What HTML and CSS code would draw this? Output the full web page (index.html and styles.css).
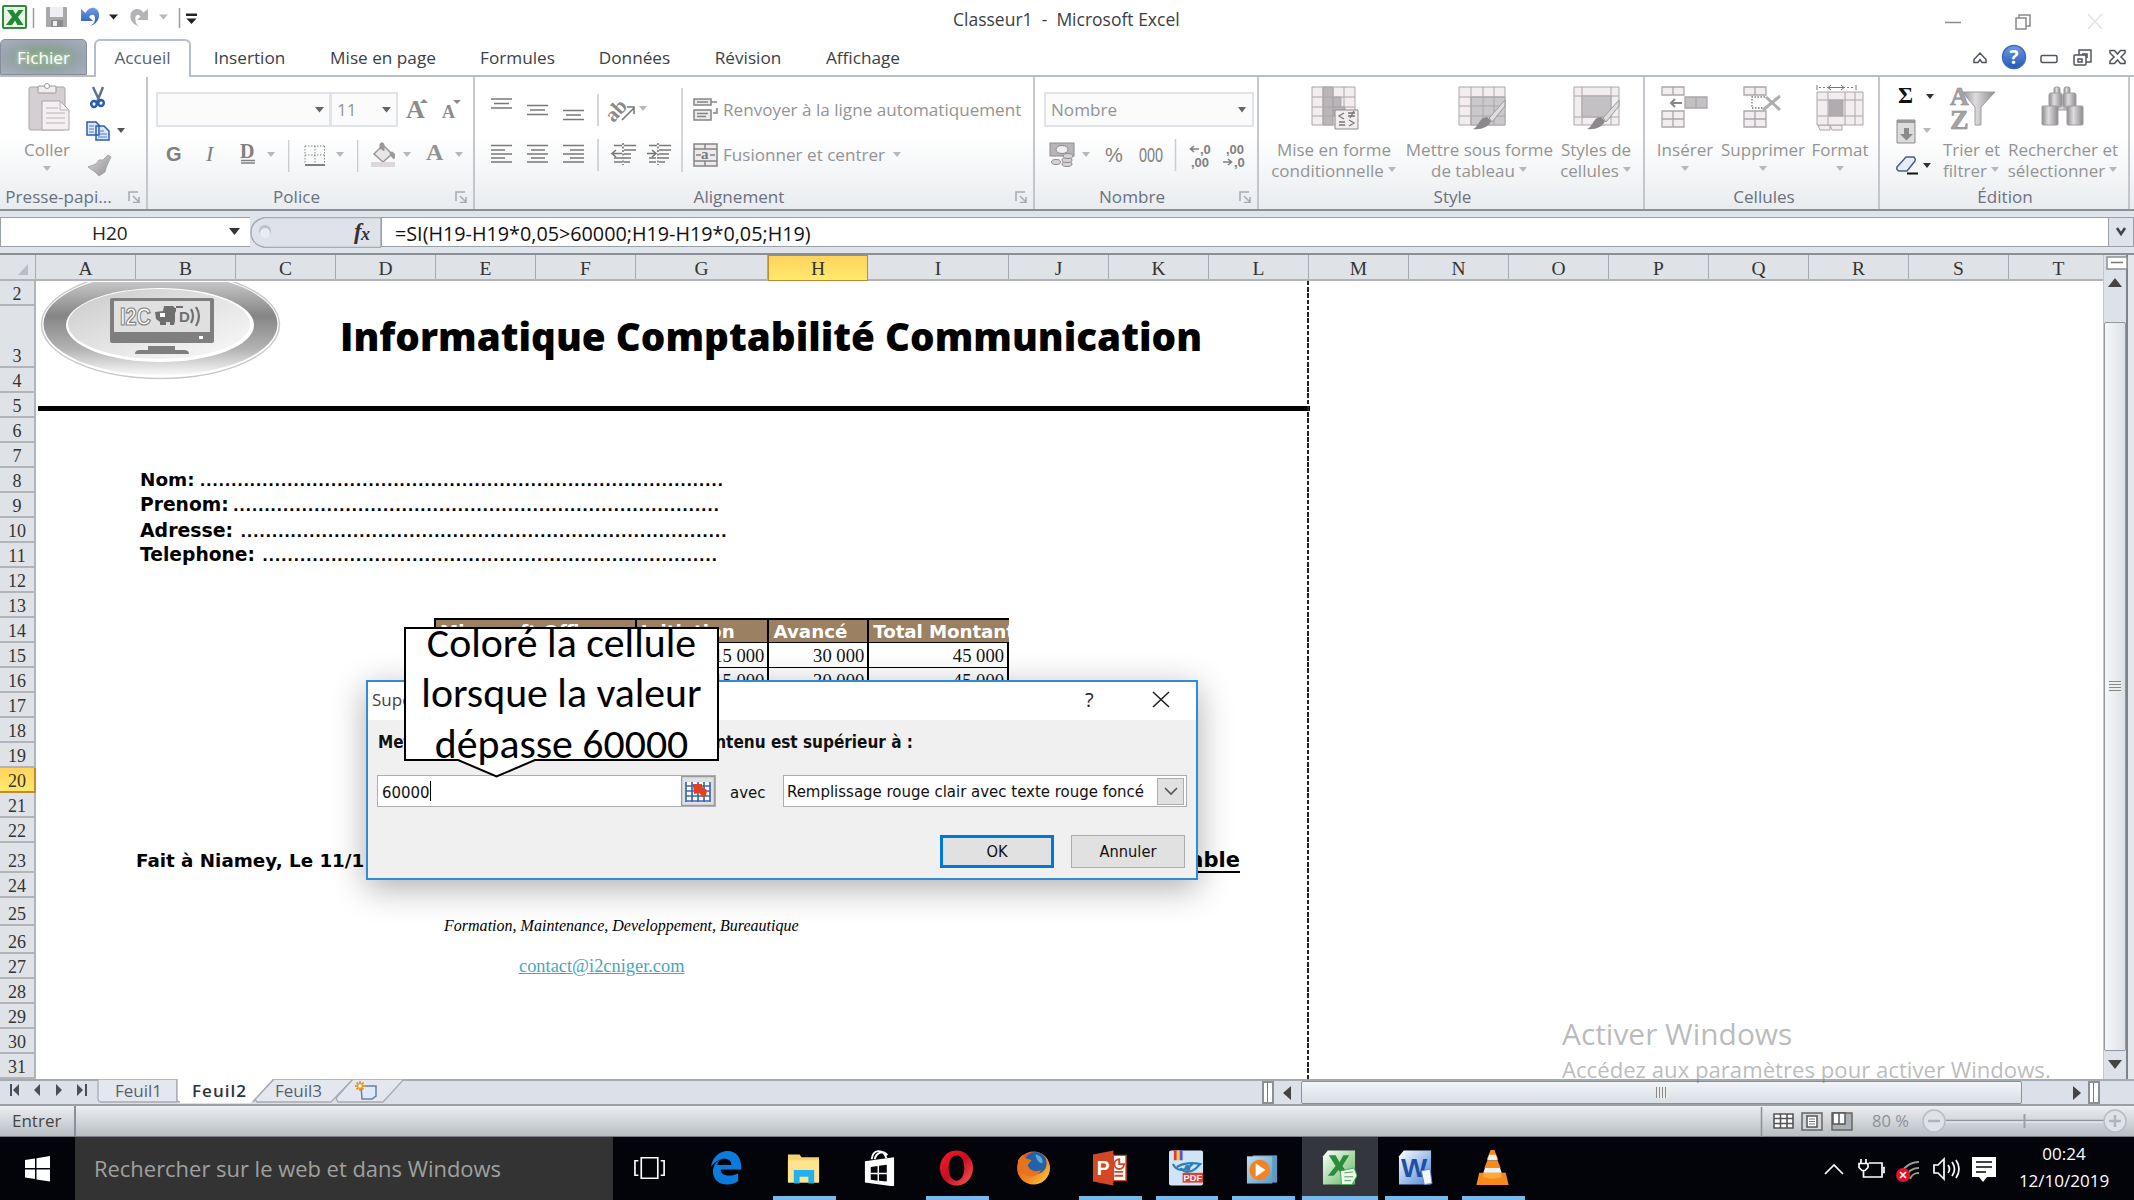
FILE: index.html
```html
<!DOCTYPE html>
<html lang="fr">
<head>
<meta charset="utf-8">
<title>Classeur1 - Microsoft Excel</title>
<link rel="stylesheet" href="styles.css">
</head>
<body>
<svg class="defs" width="0" height="0">
  <defs>
    <linearGradient id="blue" x1="0" y1="0" x2="0" y2="1"><stop offset="0" stop-color="#6f9be6"/><stop offset="1" stop-color="#2457b0"/></linearGradient>
    <linearGradient id="grey" x1="0" y1="0" x2="1" y2="1"><stop offset="0" stop-color="#dcdadc"/><stop offset="1" stop-color="#8f8d90"/></linearGradient>
    <linearGradient id="tube" x1="0" y1="0" x2="1" y2="0"><stop offset="0" stop-color="#8d8b8e"/><stop offset=".4" stop-color="#dedcde"/><stop offset="1" stop-color="#8d8b8e"/></linearGradient>
    <linearGradient id="ring" x1="0" y1="0" x2="0" y2="1"><stop offset="0" stop-color="#d8d8d8"/><stop offset=".42" stop-color="#858585"/><stop offset=".75" stop-color="#b4b4b4"/><stop offset="1" stop-color="#fafafa"/></linearGradient>
    <linearGradient id="face" x1="0" y1="0" x2="1" y2="1"><stop offset="0" stop-color="#c9c9c9"/><stop offset=".5" stop-color="#e4e4e4"/><stop offset="1" stop-color="#fafafa"/></linearGradient>
    <linearGradient id="green" x1="0" y1="0" x2="1" y2="1"><stop offset="0" stop-color="#fff"/><stop offset="1" stop-color="#5cb85f"/></linearGradient>
    <linearGradient id="word" x1="0" y1="0" x2="1" y2="1"><stop offset="0" stop-color="#fff"/><stop offset="1" stop-color="#4d86d6"/></linearGradient>
    <linearGradient id="fox" x1="0" y1="0" x2="1" y2="1"><stop offset="0" stop-color="#e0462a"/><stop offset=".6" stop-color="#f08a24"/><stop offset="1" stop-color="#ffd83a"/></linearGradient>
    <linearGradient id="opera" x1="0" y1="0" x2="1" y2="1"><stop offset="0" stop-color="#ff1b2d"/><stop offset=".5" stop-color="#c50f1f"/><stop offset="1" stop-color="#ff5a5a"/></linearGradient>
    <linearGradient id="glass" x1="0" y1="0" x2="1" y2="1"><stop offset="0" stop-color="#bfe0f2"/><stop offset="1" stop-color="#5c9cc4"/></linearGradient>
  </defs>
</svg>

<header class="titlebar">
  <svg width="205" height="38" viewBox="0 0 205 38">
    <rect x="3" y="6" width="23" height="22" rx="1" fill="#eaf5e6" stroke="#2e8b3d" stroke-width="2"/>
    <path d="M7 10h6l2.500 4 3-4h5l-5.500 7 5.500 8h-6l-2.500-4.500-3 4.500H6l6-8z" fill="#1f8a34"/>
    <path d="M33.500 8v20M179.500 8v20" stroke="#9b9b9b" stroke-width="1.500"/>
    <rect x="46" y="7" width="21" height="20" rx="1" fill="#a9a9ad"/><rect x="50" y="7" width="13" height="10" fill="#efeff1"/><rect x="51" y="20" width="12" height="7" fill="#8b8b90"/><rect x="53" y="21" width="4" height="5" fill="#eee"/>
    <path d="M81 9v12h12l-4-4c3-4 7-2 6 3-.500 3-2 4-5 6 6-2 9.500-6 9-12-1-7-9-9-13.500-1z" fill="url(#blue)"/>
    <path d="M109 14.500h9l-4.500 5z" fill="#222"/>
    <path d="M148 9v11h-11l3.500-3.500c-3-3-6-1-5 4 .500 3 1 4 4 6-6-2-10-6-9-12 1-6 9-8 13-2z" fill="#b4b4b8"/>
    <path d="M159 14.500h9l-4.500 5z" fill="#b9b9b9"/>
    <path d="M186 13.500h11v2.500h-11zM186.500 18.500h10l-5 5.500z" fill="#222"/>
  </svg>
  <h1 class="window-title">Classeur1 &nbsp;-&nbsp; Microsoft Excel</h1>
  <svg width="190" height="38" viewBox="1944 0 190 38" fill="none" stroke="#8a8a8a" stroke-width="1.500">
    <path d="M1945 22.500h16"/><path d="M2016 18h10v11h-10zM2019 18v-3h11v11h-4"/><path d="M2088 14l14 15M2102 14l-14 15" stroke="#e2e2e2"/>
  </svg>
</header>

<nav class="tabs">
  <span class="tab file">Fichier</span>
  <span class="tab active">Accueil</span>
  <span class="tab w-ins">Insertion</span>
  <span class="tab w-mise">Mise en page</span>
  <span class="tab w-form">Formules</span>
  <span class="tab w-don">Données</span>
  <span class="tab w-rev">Révision</span>
  <span class="tab w-aff">Affichage</span>
  <svg class="right" width="164" height="36" viewBox="1970 38 164 36" fill="none" stroke="#50555d" stroke-width="1.500">
    <path d="M1974 61.500v-3l6-6.500 6 6.500v3h-4l-2-3-2 3z"/>
    <circle cx="2014" cy="56" r="11.500" fill="url(#blue)" stroke="#3b6cc0"/>
    <text x="2014" y="63" class="help">?</text>
    <rect x="2041" y="54.500" width="16" height="7" rx="1.500"/>
    <path d="M2079 54v-5h12v12h-5"/><rect x="2074" y="54" width="12" height="10" rx="1"/><rect x="2078" y="58" width="4" height="3"/><path d="M2082 53h5v4"/>
    <path d="M2110 49.500h4.500l3 3.500 3-3.500h4.500v2.500l-4 4 4 4v2.500h-4.500l-3-3.500-3 3.500h-4.500V60l4-4-4-4z"/>
  </svg>
</nav>

<section class="ribbon">
  <div class="group g1">
    <div class="body">
      <div class="big">
        <svg width="64" height="56" viewBox="15 78 64 56">
          <rect x="29" y="88" width="36" height="43" rx="2" fill="#d3cfd2" stroke="#a9a5a8"/><rect x="38" y="87" width="18" height="7" rx="1" fill="#eee" stroke="#999"/><circle cx="47" cy="87" r="2.500" fill="#fff" stroke="#999"/>
          <path d="M42 102h18l9 9v20H42z" fill="#f5eff2" stroke="#a9a5a8"/><path d="M60 102v9h9M46 109h12M46 114h19M46 119h19M46 124h19" fill="none" stroke="#b8b4b7"/>
        </svg>
        <span>Coller</span>
        <svg width="10" height="20" viewBox="0 0 10 20"><path d="M1 6h8l-4 5z" fill="#b5b8bd"/></svg>
      </div>
      <svg width="58" height="104" viewBox="82 78 58 104">
        <path d="M93 87l7 15M103 87l-6 15" stroke="#5c7590" stroke-width="2.500"/><g fill="none" stroke="#2b5cb3" stroke-width="2.500"><ellipse cx="94" cy="104" rx="2.800" ry="3"/><ellipse cx="101" cy="103" rx="2.800" ry="3"/></g>
        <path d="M87 122h9l3 3v10H87zM96 126h8l5 5v9H96z" fill="#dbe8fb" stroke="#2b5cb3" stroke-width="1.500"/><path d="M89 126h5M89 129h5M89 132h5M98 131h6M98 134h9M98 137h9" stroke="#4b7ed2"/>
        <path d="M117 128h8l-4 5z" fill="#555"/>
        <path d="M103 160l5-5 3 2-3 6-2 5-1 4-6 4-4-4-7-5 8-3 3-4z" fill="url(#grey)" stroke="#aaa6a9"/>
      </svg>
    </div>
    <footer><span class="lab1">Presse-papi...</span><svg width="12" height="12" class="launch"><use href="#la"/></svg></footer>
  </div>

  <div class="group g2">
    <div class="body col">
      <div class="line">
        <div class="combo c1"><svg width="12" height="8"><path d="M1 1h9l-4.500 5.500z" fill="#666"/></svg></div>
        <div class="combo c2"><span>11</span><svg width="12" height="8"><path d="M1 1h9l-4.500 5.500z" fill="#666"/></svg></div>
        <svg width="70" height="44" viewBox="401 88 70 44" fill="#8b8b8b"><text x="406" y="118" class="ser b" font-size="26">A</text><path d="M420 103h8l-4-4z"/><text x="442" y="118" class="ser b" font-size="18">A</text><path d="M453 100h8l-4 4z"/></svg>
      </div>
      <svg width="320" height="44" viewBox="152 132 320 44" fill="#808080">
        <text x="166" y="161" class="ss b" font-size="20">G</text><text x="206" y="161" class="ser i" font-size="22">I</text><text x="240" y="158" class="ser b" font-size="20">D</text><path d="M241 160.500h14M241 163h14" stroke="#808080" stroke-width="1.300"/>
        <g fill="#b5b8bd"><path d="M267 152h8l-4 5zM336 152h8l-4 5zM403 152h8l-4 5zM455 152h8l-4 5z"/><path d="M288 140h1.300v32H288zM357 140h1.300v32H357z" opacity=".7"/></g>
        <path d="M305 146h20M305 155h20M305 146v18M315 146v18M324.500 146v18" stroke="#888" stroke-dasharray="1.500 1.500" fill="none"/><path d="M305 164h20v2h-20z"/>
        <path d="M374 154l9-9 9 9-9 8z" fill="#e8e6e8" stroke="#999" stroke-width="1.500"/><path d="M380 149v-5q3-3 4 1v6M391 152q5 0 3 7-3-2-4-5z" fill="#999" stroke="#999"/><rect x="371" y="162" width="24" height="5" fill="#ddd6da"/>
        <text x="426" y="160" class="ser b" font-size="24" fill="#929292">A</text>
      </svg>
    </div>
    <footer><span class="lab2">Police</span><svg width="12" height="12" class="launch"><use href="#la"/></svg></footer>
  </div>

  <div class="group g3">
    <div class="body">
      <svg width="212" height="96" viewBox="476 82 212 96" fill="none" stroke="#787878" stroke-width="1.600">
        <path d="M491 99h21M494 103.500h15M491 108h21" /><path d="M527 105.500h21M530 110h15M527 114.500h21"/><path d="M563 110.500h21M566 115h15M563 119.500h21"/>
        <path d="M491 145.500h21M491 150h14M491 154h21M491 158h14M491 162h21M527 145.500h21M531 150h14M527 154h21M531 158h14M527 162h21M563 145.500h21M570 150h14M563 154h21M570 158h14M563 162h21"/>
        <path d="M598 94v32M598 139v32M682 88v84" stroke="#c9ccd1"/>
        <g transform="rotate(-48 620 113)"><text x="608" y="115" class="ser b ab">ab</text></g><path d="M622 120l12-12M634 114v-7h-7"/>
        <path d="M639 106h8l-4 5z" fill="#b5b8bd" stroke="none"/>
        <path d="M614 145.500h8M624 145.500h12M624 150h12M624 154h7M614 158h8M624 158h7M614 162h8M624 162h6"/><path d="M623 143v22" stroke-dasharray="2 1.500"/><path d="M622 153.500h-9M616 150l-4 3.500 4 3.500"/>
        <path d="M649 145.500h8M659 145.500h12M659 150h12M659 154h10M649 158h7M659 158h10M649 162h7M659 162h6"/><path d="M658 143v22" stroke-dasharray="2 1.500"/><path d="M647 153.500h9M652 150l4 3.500-4 3.500"/>
      </svg>
      <div class="stack">
        <div class="btn"><svg width="26" height="28" viewBox="0 0 26 28" fill="#eee9ec" stroke="#858585" stroke-width="1.500"><path d="M1 3h17v6H1zM1 14h17v10H1zM4 17.500h11M4 20.500h9M18 6h6M24 12v5h-4M4 6h11"/></svg><span>Renvoyer à la ligne automatiquement</span></div>
        <div class="btn"><svg width="26" height="28" viewBox="0 0 26 28" fill="#eee9ec" stroke="#858585" stroke-width="1.500"><path d="M1 3h23v22H1zM1 8h23M1 20h23M12 3v5M12 20v5M3 14h5M17 14h5"/><text x="8" y="18" class="ser b m">a</text></svg><span>Fusionner et centrer</span><svg class="dd" width="9" height="6"><path d="M0 0h8l-4 5z" fill="#b5b8bd"/></svg></div>
      </div>
    </div>
    <footer><span class="lab3">Alignement</span><svg width="12" height="12" class="launch"><use href="#la"/></svg></footer>
  </div>

  <div class="group g4">
    <div class="body col">
      <div class="line"><div class="combo c3"><span>Nombre</span><svg width="12" height="8"><path d="M1 1h8l-4 5.500z" fill="#666"/></svg></div></div>
      <svg width="218" height="44" viewBox="1038 132 218 44" fill="#808080">
        <rect x="1050" y="143" width="24" height="13" fill="#b8b5b8" stroke="#8d8d8d"/><ellipse cx="1062" cy="149.500" rx="6" ry="4" fill="#eee" stroke="#8d8d8d"/><g fill="#d5d2d5" stroke="#8d8d8d"><ellipse cx="1067" cy="164" rx="5" ry="2.500"/><ellipse cx="1067" cy="160" rx="5" ry="2.500"/><ellipse cx="1068" cy="156" rx="5" ry="2.500"/><ellipse cx="1056" cy="162" rx="4.500" ry="2.500"/></g>
        <path d="M1082 152h8l-4 5z" fill="#b5b8bd"/><text x="1105" y="162" class="ss" font-size="20">%</text><text x="1139" y="162" class="ss" font-size="20" textLength="24" lengthAdjust="spacingAndGlyphs">000</text>
        <path d="M1175.500 139v32" stroke="#c9ccd1" stroke-width="1.500"/>
        <g class="ss b" font-size="13"><text x="1200" y="154">,0</text><text x="1191" y="167">,00</text><text x="1226" y="154">,00</text><text x="1234" y="167">,0</text></g>
        <path d="M1199 149h-8M1194 146l-3.500 3 3.500 3M1223 162h8M1228 159l3.500 3-3.500 3" fill="none" stroke="#808080" stroke-width="1.600"/>
      </svg>
    </div>
    <footer><span class="lab4">Nombre</span><svg width="12" height="12" class="launch"><use href="#la"/></svg></footer>
  </div>

  <div class="group g5">
    <div class="body">
      <div class="big b51">
        <svg width="60" height="56" viewBox="1303 78 60 56" stroke="#aaa6a9" fill="#f3edf0"><path d="M1311 88h43v38h-43z"/><path d="M1322 88h10v38h-10zM1332 98h8v10h-8zM1332 108h12v9h-12z" fill="#b9b6b9"/><path d="M1311 98h43M1311 108h43M1311 117h43M1322 88v38M1332 88v38M1343 88v38" fill="none"/><path d="M1334 111h23v19h-23z" stroke="#8a8a8a"/><path d="M1343 114l-5 3 5 3M1338 123h6M1338 126h6M1347 114h7M1347 117h7M1349 119l4-7M1348 121l5 3-5 3" fill="none" stroke="#777" stroke-width="1.300"/></svg>
        <span>Mise en forme<br>conditionnelle<svg class="dd" width="9" height="6"><path d="M0 0h8l-4 5z" fill="#b5b8bd"/></svg></span>
      </div>
      <div class="big b52">
        <svg width="60" height="56" viewBox="1447 78 60 56" stroke="#aaa6a9" fill="#f3edf0"><path d="M1456 88h46v38h-46z"/><path d="M1468 98h34v28h-34z" fill="#cbc8cb"/><path d="M1456 98h46M1456 107h46M1456 117h46M1468 88v38M1480 88v38M1491 88v38" fill="none"/><path d="M1502 101l-16 18 3 4 13-16z" fill="#ddd" stroke="#999"/><path d="M1470 130c6-2 6-12 14-12l4 4c-2 6-10 9-18 8z" fill="#8b898c" stroke="none"/></svg>
        <span>Mettre sous forme<br>de tableau<svg class="dd" width="9" height="6"><path d="M0 0h8l-4 5z" fill="#b5b8bd"/></svg></span>
      </div>
      <div class="big b53">
        <svg width="60" height="56" viewBox="1566 78 60 56" stroke="#aaa6a9" fill="#f3edf0"><path d="M1574 88h45v38h-45zM1574 97h45M1574 118h45M1582 88v38M1611 88v38"/><path d="M1582 97h29v21h-29z" fill="#c4c1c4"/><path d="M1619 101l-16 18 3 4 13-16z" fill="#ddd" stroke="#999"/><path d="M1587 130c6-2 6-12 14-12l4 4c-2 6-10 9-18 8z" fill="#8b898c" stroke="none"/></svg>
        <span>Styles de<br>cellules<svg class="dd" width="9" height="6"><path d="M0 0h8l-4 5z" fill="#b5b8bd"/></svg></span>
      </div>
    </div>
    <footer><span class="lab5">Style</span></footer>
  </div>

  <div class="group g6">
    <div class="body">
      <div class="big b61">
        <svg width="60" height="56" viewBox="1655 78 60 56" stroke="#aaa6a9" stroke-width="1.300" fill="#f3edf0"><path d="M1662 88h22v8h-22zM1673 88v8M1662 112h22v16h-22zM1673 112v16M1662 120h22"/><path d="M1685 98h22v11h-22zM1696 98v11" fill="#c4c1c4"/><path d="M1682 104h-11M1675 100l-4 4 4 4" stroke="#888" stroke-width="2" fill="none"/></svg>
        <span>Insérer</span><svg width="10" height="20" viewBox="0 0 10 20"><path d="M1 6h8l-4 5z" fill="#b5b8bd"/></svg>
      </div>
      <div class="big b62">
        <svg width="60" height="56" viewBox="1733 78 60 56" stroke="#aaa6a9" stroke-width="1.300" fill="#f3edf0"><path d="M1744 88h22v8h-22zM1755 88v8M1744 112h22v16h-22zM1755 112v16M1744 120h22"/><path d="M1765 98h-13v11h13" fill="none" stroke="#777" stroke-dasharray="1.500 1.500"/><path d="M1766 98l14 13M1780 97l-17 14" stroke="#b0adb0" stroke-width="3"/></svg>
        <span>Supprimer</span><svg width="10" height="20" viewBox="0 0 10 20"><path d="M1 6h8l-4 5z" fill="#b5b8bd"/></svg>
      </div>
      <div class="big b63">
        <svg width="60" height="56" viewBox="1811 78 60 56" stroke="#aaa6a9" fill="#f3edf0"><path d="M1819 126h12v5h-10zM1831 126h12v5h-10z"/><path d="M1818 93h46v33h-46zM1818 101h46M1818 117h46M1829 93v33M1846 93v33M1856 93v33"/><path d="M1830 101h14v16h-14z" fill="#b0adb0"/><path d="M1818 86v5M1857 86v5" stroke="#777"/><path d="M1820 88.500h36" stroke="#777" stroke-dasharray="2 2"/><path d="M1829 88.500h16M1832 86l-3 2.500 3 2.500M1842 86l3 2.500-3 2.500" stroke="#777" fill="none"/></svg>
        <span>Format</span><svg width="10" height="20" viewBox="0 0 10 20"><path d="M1 6h8l-4 5z" fill="#b5b8bd"/></svg>
      </div>
    </div>
    <footer><span class="lab6">Cellules</span></footer>
  </div>

  <div class="group g7">
    <div class="body">
      <svg width="50" height="104" viewBox="1883 78 50 104">
        <text x="1897" y="103" class="ser b" font-size="23" fill="#111">Σ</text><path d="M1925 94h8l-4 5z" fill="#333"/>
        <path d="M1896 120h18v23h-18z" fill="#dedbde" stroke="#8b8b8b"/><path d="M1896 120h18v3h-18z" fill="#999"/><path d="M1903 128h5v6h4l-6.500 6.500-6.500-6.500h4z" fill="#8b8b8b"/><path d="M1922 128h8l-4 5z" fill="#b5b8bd"/>
        <path d="M1896 167l9-10h8q2 2 1 4l-8 10h-8q-3-1-2-4z" fill="#e4edf9" stroke="#4c5e80" stroke-width="1.500"/><path d="M1906 173.500h11" stroke="#111" stroke-width="2"/><path d="M1922 163h8l-4 5z" fill="#333"/>
      </svg>
      <div class="big b71">
        <svg width="60" height="56" viewBox="1940 78 60 56"><text x="1948" y="106" class="ser b" font-size="26" fill="#a6a3a6" stroke="#8a888b" stroke-width=".6">A</text><text x="1948" y="130" class="ser b" font-size="28" fill="#a6a3a6" stroke="#8a888b" stroke-width=".6">Z</text><path d="M1960 93h33l-14 15v18h-6v-18z" fill="url(#tube)" stroke="#a09da0"/></svg>
        <span>Trier et<br>filtrer<svg class="dd" width="9" height="6"><path d="M0 0h8l-4 5z" fill="#b5b8bd"/></svg></span>
      </div>
      <div class="big b72">
        <svg width="60" height="56" viewBox="2032 78 60 56" fill="url(#tube)" stroke="#a09da0"><rect x="2054" y="97" width="15" height="14"/><rect x="2053" y="88" width="6" height="8" rx="2"/><rect x="2063" y="88" width="6" height="8" rx="2"/><rect x="2048" y="94" width="13" height="14" rx="2"/><rect x="2062" y="94" width="13" height="14" rx="2"/><rect x="2041" y="107" width="16" height="19" rx="1"/><rect x="2066" y="107" width="16" height="19" rx="1"/></svg>
        <span>Rechercher et<br>sélectionner<svg class="dd" width="9" height="6"><path d="M0 0h8l-4 5z" fill="#b5b8bd"/></svg></span>
      </div>
    </div>
    <footer><span class="lab7">Édition</span></footer>
  </div>
</section>
<svg class="defs" width="0" height="0"><defs><g id="la" fill="none" stroke="#a7abb1" stroke-width="1.500"><path d="M1 10V1h9"/><path d="M5 5l6 6M11 6v5.500H5"/></g></defs></svg>

<section class="formulabar">
  <div class="namebox"><span>H20</span><svg width="12" height="8"><path d="M0 0h11l-5.500 7z" fill="#333"/></svg></div>
  <div class="fx"><svg width="131" height="31" viewBox="250 217 131 31"><path d="M265 217.500h116v30H265q-14-3-14-15t14-15z" fill="#dfe3e9" stroke="#a5abb3" stroke-width="1.500"/><circle cx="265" cy="231" r="6" fill="#bcc2ca"/><circle cx="265" cy="233" r="5" fill="#e9ecf0"/><text x="354" y="239" class="ser b i" font-size="23" fill="#333">f</text><text x="361" y="240" class="ser b i" font-size="18" fill="#333">x</text></svg></div>
  <div class="formula">=SI(H19-H19*0,05&gt;60000;H19-H19*0,05;H19)</div>
  <div class="expand"><svg width="12" height="10"><path d="M2 1l4 6 4-6" fill="none" stroke="#444" stroke-width="2.600"/></svg></div>
</section>

<main class="work">
  <div class="gridarea">
    <div class="cols">
      <span class="corner"><svg width="36" height="25"><path d="M28 9v11H18z" fill="#b9bec5"/></svg></span>
      <span>A</span><span>B</span><span>C</span><span>D</span><span>E</span><span>F</span><span class="cg">G</span><span class="sel">H</span><span class="ci">I</span><span>J</span><span>K</span><span>L</span><span>M</span><span>N</span><span>O</span><span>P</span><span>Q</span><span>R</span><span>S</span><span>T</span>
    </div>
    <div class="sheet">
      <div class="row h2"><b>2</b></div>
      <div class="row h3"><b>3</b></div>
      <div class="row"><b>4</b></div>
      <div class="row"><b>5</b></div>
      <div class="row"><b>6</b></div>
      <div class="row"><b>7</b></div>
      <div class="row"><b>8</b><p class="field f1">Nom: <i>....................................................................................</i></p></div>
      <div class="row"><b>9</b><p class="field f2">Prenom: <i>..............................................................................</i></p></div>
      <div class="row"><b>10</b><p class="field f3">Adresse: <i>..............................................................................</i></p></div>
      <div class="row"><b>11</b><p class="field f4">Telephone: <i>.........................................................................</i></p></div>
      <div class="row"><b>12</b></div>
      <div class="row"><b>13</b></div>
      <div class="row"><b>14</b><div class="trow th"><span class="t1">Microsoft Office</span><span class="t2">Initiation</span><span class="t3">Avancé</span><span class="t4">Total Montant</span></div></div>
      <div class="row"><b>15</b><div class="trow"><span class="t1"></span><span class="t2">15 000</span><span class="t3">30 000</span><span class="t4">45 000</span></div></div>
      <div class="row"><b>16</b><div class="trow"><span class="t1"></span><span class="t2">15 000</span><span class="t3">30 000</span><span class="t4">45 000</span></div></div>
      <div class="row"><b>17</b></div>
      <div class="row"><b>18</b></div>
      <div class="row"><b>19</b></div>
      <div class="row"><b class="sel">20</b></div>
      <div class="row"><b>21</b></div>
      <div class="row"><b>22</b></div>
      <div class="row h23"><b>23</b><p class="made">Fait à Niamey, Le 11/1</p><p class="acc">able</p></div>
      <div class="row"><b>24</b></div>
      <div class="row h25"><b>25</b><p class="motto">Formation, Maintenance, Developpement, Bureautique</p></div>
      <div class="row h26"><b>26</b></div>
      <div class="row"><b>27</b><a class="mail">contact@i2cniger.com</a></div>
      <div class="row"><b>28</b></div>
      <div class="row"><b>29</b></div>
      <div class="row"><b>30</b></div>
      <div class="row"><b>31</b></div>
      <div class="rule"></div>
      <div class="pagebreak"></div>
      <svg class="logo" width="246" height="100" viewBox="38 281 246 100">
        <ellipse cx="161.500" cy="323.500" rx="119" ry="54" fill="#fff" stroke="#c9c9c9" stroke-width="1.500"/>
        <ellipse cx="161.500" cy="323" rx="117" ry="51.500" fill="url(#ring)"/>
        <ellipse cx="161" cy="324" rx="94" ry="37" fill="#fff"/>
        <ellipse cx="160" cy="323" rx="91" ry="35" fill="url(#face)"/>
        <path d="M113 297h100q2 0 2 2v41q0 2-2 2H113q-2 0-2-2v-41q0-2 2-2z" fill="#7f7f7f"/><path d="M115 300h96v31h-96z" fill="#e0e0e0"/><rect x="200" y="335" width="4" height="3" fill="#fff"/>
        <path d="M149 345h27v4h9q5 0 5 4h-54q0-4 5-4h8z" fill="#7f7f7f"/>
        <text x="121" y="324" class="ss b" font-size="24" fill="#fff" stroke="#7f7f7f" stroke-width="1.200" textLength="31" lengthAdjust="spacingAndGlyphs">I2C</text>
        <path d="M156 311l8-1 1-5h9l2 2h8v-2h-7v5l-1 2v8l-1 4h-4v-3h-4v3h-6v-3l-4-3z" fill="#6f6f6f"/><path d="M161 312h5v4h-5z" fill="#fff"/><text x="180" y="321" class="ss b" font-size="15" fill="#6f6f6f">D</text>
        <path d="M192 308q4 7 0 14M197 306q6 9 0 19" fill="none" stroke="#6f6f6f" stroke-width="2.200"/>
      </svg>
      <h2 class="headline">Informatique Comptabilité Communication</h2>
    </div>
  </div>
  <div class="vscroll">
    <svg width="25" height="64" viewBox="2103 255 25 64"><rect x="2106" y="257" width="20" height="12" fill="#fff" stroke="#8b9097" stroke-width="1.500"/><path d="M2110 262.500h12" stroke="#777" stroke-width="1.500"/><path d="M2107 287h14l-7-9z" fill="#444"/></svg>
    <div class="thumb"><i></i></div>
    <svg width="25" height="28"><path d="M4 9h14l-7 9z" fill="#444"/></svg>
  </div>
</main>

<section class="sheetbar">
  <svg width="1262" height="25" viewBox="0 1079 1262 25">
    <g fill="#4a4f57"><path d="M10 1084h2v12h-2zM19 1084v12l-6-6zM40 1084v12l-6-6zM56 1084v12l6-6zM77 1084v12l6-6zM85 1084h2v12h-2z"/></g>
    <path d="M98 1079v19q0 4 3 4h76v-23z" fill="#e4e8ee" stroke="#a5abb3" stroke-width="1.300"/>
    <path d="M257 1102h74l22-23h-79l-20 19z" fill="#e4e8ee" stroke="#a5abb3" stroke-width="1.300"/>
    <path d="M338 1102h45l21-23h-51l-17 19z" fill="#e4e8ee" stroke="#a5abb3" stroke-width="1.300"/>
    <path d="M177 1079v20q0 4 3 4h70l5-5 18-19z" fill="#fff"/><path d="M177 1079v20q0 3 3 3M253 1102l21-23" fill="none" stroke="#a5abb3" stroke-width="1.300"/>
    <text x="115" y="1097" class="st">Feuil1</text><text x="192" y="1097" class="st act" textLength="54">Feuil2</text><text x="275" y="1097" class="st">Feuil3</text>
    <path d="M361 1086h15v10l-4 3h-10z" fill="#dfe8f8" stroke="#6a7ea8" stroke-width="1.500"/><path d="M360 1081v10M355 1086h10M356.500 1082.500l7 7M363.500 1082.500l-7 7" stroke="#e39a26" stroke-width="1.800"/><circle cx="360" cy="1086" r="1.800" fill="#fff"/>
  </svg>
  <span class="split"></span>
  <svg width="27" height="25"><path d="M17 5v14l-8-7z" fill="#444"/></svg>
  <div class="hthumb"><i></i></div>
  <svg width="66" height="25"><path d="M51 5v14l8-7z" fill="#444"/></svg>
  <span class="split"></span>
</section>

<section class="status">
  <span class="mode">Entrer</span>
  <svg class="right" width="380" height="32" viewBox="1754 1105 380 32" fill="none">
    <path d="M1761.500 1106v30" stroke="#8b9097" stroke-width="1.500"/>
    <path d="M1774 1113h19v14h-19zM1774 1117.500h19M1774 1122.500h19M1780.500 1113v14M1787 1113v14" stroke="#555" stroke-width="1.600" fill="#fff"/>
    <rect x="1802" y="1112" width="20" height="17" fill="#d2d6dc" stroke="#666" stroke-width="1.500"/><rect x="1807" y="1115" width="10" height="11" fill="#fff" stroke="#555" stroke-width="1.500"/><path d="M1809 1118h6M1809 1120.500h6M1809 1123h6" stroke="#777"/>
    <rect x="1832" y="1112" width="20" height="17" fill="#aab0b8" stroke="#666" stroke-width="1.500"/><path d="M1833 1112h12v11h-12zM1839 1112v11" fill="#fff" stroke="#555" stroke-width="1.500"/>
    <text x="1872" y="1126" class="zoomv">80 %</text>
    <path d="M1946 1119.500h158" stroke="#8f969e" stroke-width="1.500"/><path d="M1946 1121h158" stroke="#f2f4f6"/><path d="M2024.500 1113v14" stroke="#9aa0a8" stroke-width="2"/>
    <circle cx="1934" cy="1120" r="11" fill="#dfe2e6" stroke="#b8bdc3" stroke-width="1.500"/><path d="M1928 1120h12" stroke="#b0b4ba" stroke-width="2.500"/>
    <circle cx="2115" cy="1120" r="11" fill="#dfe2e6" stroke="#b8bdc3" stroke-width="1.500"/><path d="M2109 1120h12M2115 1114v12" stroke="#b0b4ba" stroke-width="2.500"/>
  </svg>
</section>

<footer class="taskbar">
  <div class="start"><svg width="26" height="26" fill="#fff"><path d="M0 4l10-1.500V12H0zM11.500 2.200L25 0v12H11.500zM0 13.500h10V23L0 21.500zM11.500 13.500H25v12L11.500 23.500z"/></svg></div>
  <div class="search">Rechercher sur le web et dans Windows</div>
  <div class="apps">
    <span><svg viewBox="0 0 36 36" fill="none" stroke="#fff" stroke-width="1.700"><path d="M8.500 7.500h17v21h-17zM5.500 10.500H2v15h3.500M28.500 10.500H32v15h-3.500"/></svg></span>
    <span><svg viewBox="0 0 36 36"><path d="M2 16.500C4 5.500 12 .5 19 .5c10 0 15 8 14 19H12c0 7 11 8 18 4v8c-11 7-26 3-26-10 0-6 4-10 8-12.500-2 2-3 4-3.500 6H23c0-9-13-9-21 1.500z" fill="#0b7bdc"/></svg></span>
    <span class="run"><svg viewBox="0 0 36 36"><path d="M2 4h12l2 3h18v26H2z" fill="#f3d272"/><path d="M2 10h32v23H2z" fill="#ffe48f"/><path d="M8 34V20h21v14h-6v-7h-9v7z" fill="#22b1ee"/></svg></span>
    <span><svg viewBox="0 0 36 36" fill="#fff"><path d="M3 11l30-4v30L3 33z"/><path d="M10 9c1-11 12-11 15-1M13 9c2-8 10-9 13-4" fill="none" stroke="#fff" stroke-width="2"/><path d="M9 17l7-1v7H9zM17.500 15.700l8-1V23h-8zM9 24.500h7v6.500l-7-1zM17.500 24.500h8V32l-8-1z" fill="#05060c"/></svg></span>
    <span class="run"><svg viewBox="0 0 36 36"><path d="M18 0a17 18 0 1 0 .01 0zM18 5c5 0 8 6 8 13s-3 13-8 13-8-6-8-13 3-13 8-13z" fill="url(#opera)" fill-rule="evenodd"/></svg></span>
    <span><svg viewBox="0 0 36 36"><circle cx="18" cy="18" r="17" fill="url(#fox)"/><circle cx="20" cy="13" r="11.500" fill="#2462a8"/><path d="M20 4c6 1 8 5 7 9-3 0-6-3-7-9z" fill="#5ea9dc"/><path d="M2 10c3-4 5-6 6-5 0 3 2 3 5 4l3 1-4 5c2 6 8 8 14 5-4 8-15 9-20 2-4-4-4-8-4-12z" fill="#e8731f"/></svg></span>
    <span class="run"><svg viewBox="0 0 36 36"><path d="M1 4l21-4v36L1 32z" fill="#d24726"/><path d="M22 5h13v26H22z" fill="#fff" stroke="#d24726" stroke-width="1.500"/><path d="M28 9a5 5 0 1 0 5 5h-5zM23 22h9M23 26h9" fill="none" stroke="#d24726" stroke-width="2"/><text x="5" y="25" class="ss b" font-size="20" fill="#fff">P</text></svg></span>
    <span class="run"><svg viewBox="0 0 36 36"><rect x="0" y="0" width="35" height="36" rx="2" fill="#cfe4f7"/><path d="M5 0h3v10H5z" fill="#e33"/><path d="M8 0h3v10H8z" fill="#f5d32b"/><path d="M11 0h3v10h-3z" fill="#5a55d8"/><path d="M4 14c4 8 12 8 20 0M8 17c6-4 16-5 24-3l-5 5c-5 4-12 4-15-1" fill="none" stroke="#2c7fb8" stroke-width="2.300"/><circle cx="19" cy="18" r="3" fill="#2c7fb8"/><rect x="14" y="23" width="21" height="10" fill="#e8392b"/><text x="15" y="31.500" class="ss b" font-size="9.500" fill="#fff">PDF</text></svg></span>
    <span class="run"><svg viewBox="0 0 36 36"><path d="M8 5h25v28H8z" fill="#5c9cc4"/><path d="M2 6h26v28H2z" fill="url(#glass)"/><circle cx="15" cy="20" r="10.500" fill="#f58220"/><path d="M11 13l10 7-10 7z" fill="#fff"/></svg></span>
    <span class="run cur"><svg viewBox="0 0 36 36"><path d="M6 0h28v35H1V6z" fill="url(#green)"/><path d="M7 5h7l4 7 4-7h6l-7 11 7 10h-7l-4-6-5 6H6l8-10z" fill="#2b8c3c"/><path d="M19 21l14-3 3 8-5 9H20z" fill="#eef7ec" stroke="#4ca454"/><path d="M23 23l9-1M23 27h9M23 31h7" stroke="#4ca454"/></svg></span>
    <span class="run"><svg viewBox="0 0 36 36"><path d="M6 0h28v35H1V6z" fill="url(#word)"/><text x="3" y="27" class="ss b" font-size="27" fill="#1d4fa8" textLength="27" lengthAdjust="spacingAndGlyphs">W</text><path d="M24 21l9-2 2 15-8 1z" fill="#f4f8ff" stroke="#5c86c8"/></svg></span>
    <span class="run"><svg viewBox="0 0 36 38"><path d="M16 0h4l4 10h-12z" fill="#f78a1d"/><path d="M14.500 5h7l2 6h-11z" fill="#f1f1f1"/><path d="M12.500 11h11l3 8h-17z" fill="#f78a1d"/><path d="M10 19h16l2 6H8z" fill="#f1f1f1"/><path d="M4 24h28l3 13H1z" fill="#f78a1d"/><path d="M9 24h18l1 4c-5 3-15 3-20 0z" fill="#ffa93c"/></svg></span>
  </div>
  <svg class="right" width="180" height="63" viewBox="1820 1137 180 63" fill="none" stroke="#fff" stroke-width="1.700">
    <path d="M1825 1174l9-9 9 9"/>
    <path d="M1869 1163h13v14h-14M1883 1167.500h1v5h-1M1861 1159v4M1866 1159v4M1859 1163.500h9v4l-3 3h-3l-3-3zM1863.500 1170.500v6.500h5"/>
    <g stroke="#999" stroke-width="2"><path d="M1900 1176a20 20 0 0 1 19-14M1905 1178a14 14 0 0 1 14-10M1910 1179a9 9 0 0 1 9-6"/></g><circle cx="1903" cy="1175" r="7" fill="#e81123" stroke="none"/><path d="M1900 1172l6 6M1906 1172l-6 6"/>
    <path d="M1934 1165h4l6-6v20l-6-6h-4zM1948 1165q3 4 0 8M1952 1162q5 7 0 14M1956 1160q6 9 0 18"/>
    <path d="M1972 1157h24v20h-9l-4 5-4-5h-7z" fill="#fff" stroke="none"/><path d="M1976 1162h16M1976 1167h16M1976 1172h10" stroke="#05060c"/>
  </svg>
  <div class="clock"><span>00:24</span><span>12/10/2019</span></div>
</footer>

<aside class="watermark"><p class="w1">Activer Windows</p><p class="w2">Accédez aux paramètres pour activer Windows.</p></aside>

<div class="dialog">
  <header><span>Supérieur à</span><svg width="150" height="38" viewBox="1046 682 150 38"><text x="1085" y="707" class="q">?</text><path d="M1153 692l16 15M1169 692l-16 15" stroke="#222" stroke-width="1.600"/></svg></header>
  <p class="prompt"><span>Mettre en forme</span><span>contenu est supérieur à :</span></p>
  <div class="fields">
    <div class="input"><span>60000</span><i></i><svg width="34" height="30" viewBox="681 776 34 30"><rect x="681.500" y="776.500" width="33" height="29" fill="#e1e1e1" stroke="#9c9c9c" stroke-width="1.500"/><rect x="686" y="782" width="24" height="20" fill="#fff"/><path d="M686 786h24M686 791h24M686 796h24M686 801h24M686 782v20M692 782v20M698 782v20M704 782v20M710 782v20" stroke="#3c66b5" stroke-width="1.700"/><path d="M693 784h9v3l5 3-1 6-3 1-4-4-5 1z" fill="#e2401f"/></svg></div>
    <span class="avec">avec</span>
    <div class="select"><span>Remplissage rouge clair avec texte rouge foncé</span><b><svg width="14" height="10"><path d="M1 2l6 6 6-6" fill="none" stroke="#555" stroke-width="1.600"/></svg></b></div>
  </div>
  <div class="buttons"><button class="ok">OK</button><button>Annuler</button></div>
</div>

<div class="callout">
  <svg width="319" height="154" viewBox="402 625 319 154"><path d="M405 628h313v132H535l-38.500 16.500L458 760h-53z" fill="#fff" stroke="#000" stroke-width="2"/></svg>
  <p>Coloré la cellule<br>lorsque la valeur<br>dépasse 60000</p>
</div>
</body>
</html>
```
FILE: styles.css
```css
*{box-sizing:border-box}
body{margin:0;width:2134px;height:1200px;overflow:hidden;position:relative;background:#fff;font-family:"Open Sans",sans-serif;font-size:17.1px;color:#3b3f46;display:flex;flex-direction:column}
svg{display:block;flex:none}
.defs{position:absolute}
p,h1,h2{margin:0}
.right{margin-left:auto}
.ser{font-family:"Liberation Serif",serif}
.ss{font-family:"Liberation Sans",sans-serif}
.b{font-weight:700}
.i{font-style:italic}

.titlebar{height:39px;flex:none;display:flex}
.window-title{flex:1;padding-left:748px;font-size:17.5px;font-weight:400;line-height:39px;white-space:pre}

.tabs{height:38px;flex:none;display:flex;border-bottom:2px solid #b7bec7;font-size:17.2px;line-height:38px}
.tab{white-space:nowrap;text-align:center;height:36px}
.file{width:87px;margin-right:7px;background:radial-gradient(ellipse at center,#7f9f78 10%,#9aa5ae 65%,#a7b0bb);border:1px solid #858d98;border-radius:5px 5px 0 0;color:#fff;text-shadow:0 0 4px #dfeeda;line-height:36px}
.tab.active{width:97px;height:38px;background:#fff;border:2px solid #b7bec7;border-bottom:0;border-radius:6px 6px 0 0;color:#5a5f6e;line-height:34px}
.w-ins{width:117px}.w-mise{width:150px}.w-form{width:119px}.w-don{width:115px}.w-rev{width:112px}.w-aff{width:118px}
.help{font:700 19px "Open Sans",sans-serif;fill:#fff;stroke:none;text-anchor:middle}

.ribbon{height:134px;flex:none;display:flex;background:linear-gradient(#fff 45%,#e9ecef);border-bottom:2px solid #8b9097;color:#949494}
.group{display:flex;flex-direction:column;border-right:2px solid #c3c7cd;height:132px;flex:none}
.g1{width:148px}.g2{width:327px}.g3{width:560px}.g4{width:224px}.g5{width:386px}.g6{width:235px}.g7{width:250px}
.body{height:107px;display:flex;align-items:flex-start}
.col{flex-direction:column}
.group footer{height:25px;display:flex;align-items:center;justify-content:center;position:relative;color:#6b7180;line-height:22px}
.launch{position:absolute;right:6px;top:7px}
.lab1{margin-right:29px}.lab2{margin-right:28px}.lab3{margin-right:30px}.lab4{margin-right:28px}.lab5{margin-left:3px}.lab6{margin-left:5px}.lab7{margin-left:2px}
.big{display:flex;flex-direction:column;align-items:center;text-align:center;line-height:20.5px;white-space:nowrap}
.big>span{margin-top:7px;height:20px;font-size:17px}
.g1 .big{width:82px;margin-left:6px;margin-right:-6px}
.dd{display:inline-block;margin:0 0 4px 4px}
.btn .dd{margin:0 0 0 8px}
.line{display:flex;height:44px;margin-top:11px}
.g2 .body{padding-left:4px}
.g2 .line{margin-left:-4px}
.combo{height:35px;border:2px solid #e0e3e8;background:#fbfbfc;display:flex;align-items:center;margin-top:4px;padding:0 3px 0 5px}
.combo svg{margin-left:auto}
.c1{width:175px;margin-left:8px}
.c2{width:68px;margin-left:-1px}
.c3{width:210px;margin-left:9px}
.c2+svg{margin-left:3px}
.g4 .body>svg{margin-left:3px}
.g3 .body>svg{margin-top:5px;margin-left:1px}
.stack{display:flex;flex-direction:column;padding-left:5px;padding-top:18px;gap:16px}
.btn{display:flex;align-items:center;height:29px;white-space:nowrap}
.btn span{margin-left:4px}
.ab{font-size:21px;fill:#8b8b8b;stroke:none}
.m{font-size:15px;fill:#777;stroke:none}
.g1 .body>svg{margin-top:1px}
.g5 .body{padding-left:6px}
.b51{width:138px}.b52{width:153px}.b53{width:80px}
.g6 .body{padding-left:4px}
.b61{width:72px}.b62{width:84px}.b63{width:70px}
.g7 .body{padding-left:4px}
.g7 .body>svg{margin-top:1px}
.b71{width:71px;margin-left:2px}.b72{width:112px}

.formulabar{height:44px;flex:none;display:flex;background:#dfe3ea;border-top:1px solid #dfe3ea;padding-top:5px;border-bottom:2px solid #8b9097;padding-bottom:6px}
.namebox{width:250px;background:#fff;border:1px solid #9aa0a8;border-right:0;display:flex;align-items:center;color:#222;font-size:19px;padding-left:91px}
.namebox svg{margin-left:101px}
.namebox span{padding-top:2px}
.fx{width:131px}
.formula{flex:1;background:#fff;border:1px solid #9aa0a8;font-size:19.75px;line-height:32px;padding-left:13px;color:#111;white-space:pre}
.expand{width:25px;border:1px solid #9aa0a8;border-left:0;display:flex;align-items:center;justify-content:center}

.work{height:824px;flex:none;display:flex;border-right:6px solid #e4e7ec}
.gridarea{width:2103px;overflow:hidden;flex:none}
.cols{display:flex;height:26px;background:#dfe3e8;border-bottom:2px solid #b1b5ba;font:19.5px/27px "Liberation Serif",serif;color:#333}
.cols span{width:100px;flex:none;border-right:1.5px solid #a5aab1;text-align:center}
.cols .corner{width:36px}
.cols .cg{width:132px}.cols .ci{width:141px}
.cols .sel{height:26px;background:linear-gradient(#ffd45c,#ffe96e);border:1.5px solid #c48b2e;line-height:25px}
.sheet{position:relative;height:798px;overflow:hidden;background:#fff}
.row{height:25px;display:flex;position:relative}
.row>b{width:36px;flex:none;background:#dfe3e8;border-right:2px solid #b1b5ba;border-bottom:2px solid #b1b5ba;font:18px/20px "Liberation Serif",serif;color:#333;display:flex;align-items:flex-end;justify-content:center;overflow:hidden}
.row>b.sel{background:linear-gradient(#ffd45c,#ffe96e);border-color:#c48b2e}
.h2{height:24.5px}.h3{height:62.5px}.h23{height:29.5px}.h25{height:28.5px}.h26{height:28px}
.field{padding-left:104px;font:700 18.4px/24px "DejaVu Sans",sans-serif;color:#000;white-space:pre}
.field i{font:700 18.4px/24px "Liberation Sans",sans-serif;letter-spacing:1.13px;margin-left:-1px}
.f2,.f4{font-size:18.7px}
.f2 i{margin-left:-2px}
.f3{font-size:18.9px}
.f3 i{margin-left:1px}
.f4 i{margin-left:1px}
.trow{display:flex;margin-left:398px;width:575px;border:solid #000;border-width:0 2px 1.5px;font:18.6px/25px "Liberation Serif",serif;color:#111}
.trow span{border-right:2px solid #000;text-align:right;padding-right:3px;white-space:nowrap;overflow:hidden}
.trow .t1{width:201px}.trow .t2{width:133px}.trow .t3{width:100px}.trow .t4{width:138px;border:0}
.trow.th{background:#9b8062;color:#fff;font:700 18.3px/24px "DejaVu Sans",sans-serif;border-width:2px 0 1.5px 2px}
.trow.th span{text-align:left;padding-left:4px;padding-right:0}
.trow.th .t4{width:140px;letter-spacing:-.1px}
.made{position:absolute;left:136px;top:3px;font:700 18.3px/30px "DejaVu Sans",sans-serif;color:#000}
.acc{position:absolute;right:894px;top:2px;font:700 21px/30px "DejaVu Sans",sans-serif;color:#000;border-bottom:2px solid #000;height:28px}
.row.h23{width:2134px}
.motto{margin-left:408px;height:57px;font:italic 16.05px/56px "Liberation Serif",serif;color:#000;white-space:nowrap}
.mail{margin-left:483px;font:18.4px/24px "Liberation Serif",serif;color:#4aa5bd;text-decoration:underline}
.rule{position:absolute;left:38px;top:125px;width:1272px;height:5px;background:#000}
.pagebreak{position:absolute;left:1307px;top:0;width:2px;height:798px;background:repeating-linear-gradient(#222 0 4.5px,#fff 4.5px 6.25px)}
.logo{position:absolute;left:37px;top:1px}
.headline{position:absolute;left:340px;top:27px;font:800 38.65px/56px "Open Sans",sans-serif;color:#000;white-space:nowrap}

.vscroll{width:25px;background:#dde2ea;border-left:1px solid #c3c8cf;border-right:2px solid #7d838b;display:flex;flex-direction:column}
.thumb{height:732px;margin-top:3px;border:1.5px solid #9298a0;border-radius:2px;background:linear-gradient(90deg,#f5f7fa,#dde1e7);display:flex;align-items:center;justify-content:center}
.thumb i{width:12px;height:11px;background:repeating-linear-gradient(#888 0 1.5px,#eee 1.5px 3px)}

.sheetbar{height:25px;flex:none;display:flex;background:#dce0e8;border-top:2px solid #a5abb3}
.sheetbar>svg:first-child{margin-top:-2px}
.st{font:17px "Open Sans",sans-serif;fill:#5a5f6e}
.st.act{font-weight:600;fill:#2d3440}
.split{width:12px;height:23px;border:2px solid #8b9097;background:linear-gradient(90deg,#fff 3px,#777 3px 4.500px,#fff 4.500px)}
.hthumb{width:721px;height:23px;border:1.5px solid #8b9097;border-radius:2px;background:linear-gradient(#f2f4f8,#dadee5);display:flex;align-items:center;justify-content:center}
.hthumb i{width:12px;height:11px;background:repeating-linear-gradient(90deg,#888 0 1.5px,#eee 1.5px 3px)}

.status{height:33px;flex:none;display:flex;background:linear-gradient(#eceef0,#b9bec3);border-top:2px solid #99a0a8;border-bottom:1px solid #7a7e84}
.mode{width:76px;border-right:2px solid #8b9097;padding-left:12px;line-height:30px;font-size:17px;color:#444}
.zoomv{font:16.5px "Open Sans",sans-serif;fill:#8d9096}

.taskbar{height:63px;flex:none;display:flex;background:#02040a}
.start{width:75px;display:flex;align-items:center;justify-content:center}
.search{width:538px;background:#333;color:#a0a0a0;font-size:21.95px;line-height:64px;padding-left:19px}
.apps{display:flex}
.apps span{width:76.55px;height:63px;position:relative;display:flex;justify-content:center;padding-top:13px}
.apps svg{width:35px;height:36px;margin-left:-2px}
.run::after{content:"";position:absolute;left:7px;right:7px;bottom:0;height:4px;background:#76b9ed}
.cur{background:#33373d}
.cur::after{left:0;right:0}
.clock{width:134px;display:flex;flex-direction:column;text-align:center;color:#fff;font-size:17px;line-height:26.5px;padding:4px 6px 0 0}

.watermark{position:absolute;left:1562px;top:1010px;color:rgba(120,120,120,.5);white-space:nowrap}
.w1{font-size:29.9px;line-height:48px}
.w2{font-size:22.15px;line-height:22px}

.dialog{position:absolute;left:366px;top:680px;width:832px;height:200px;background:#f0f0f0;border:2px solid #2f8bd8;box-shadow:0 8px 32px rgba(0,0,0,.32);font-family:"DejaVu Sans Condensed","DejaVu Sans",sans-serif;font-stretch:condensed;font-size:16.65px;color:#111;display:flex;flex-direction:column}
.dialog header{height:38px;background:#fff;display:flex;justify-content:space-between;padding-left:4px;font:17px/36px "Open Sans",sans-serif;color:#444}
.q{font:20px "Open Sans",sans-serif;fill:#222}
.prompt{height:55px;font-weight:700;font-size:17px;line-height:45px;display:flex;justify-content:space-between;padding:0 283px 0 10px}
.fields{display:flex;padding-left:9px}
.input{width:339px;height:32px;border:1.5px solid #abadb3;background:#fff;display:flex;align-items:center;padding-left:4px}
.input span{padding-top:2px}
.input svg{margin-left:auto}
.input i{width:1.5px;height:20px;background:#000}
.avec{margin:0 16px 0 14px;line-height:35px;width:37px}
.select{width:404px;height:32px;border:1.5px solid #abadb3;background:#fff;display:flex;align-items:center;justify-content:space-between;padding:0 2px 0 3px;white-space:nowrap}
.select b{width:27px;height:27px;border:1.5px solid #adadad;background:#e1e1e1;display:flex;align-items:center;justify-content:center}
.buttons{display:flex;justify-content:flex-end;gap:17px;padding:25px 11px 0}
.buttons button{width:114px;height:33px;border:1.5px solid #adadad;background:#e1e1e1;font:inherit;font-size:16.3px;padding:0;color:#111}
.buttons .ok{border:3px solid #0078d7}

.callout{position:absolute;left:402px;top:625px}
.callout p{position:absolute;left:0;top:-7px;width:319px;font:41.8px/50.4px Carlito,sans-serif;color:#000;text-align:center;white-space:nowrap}
```
